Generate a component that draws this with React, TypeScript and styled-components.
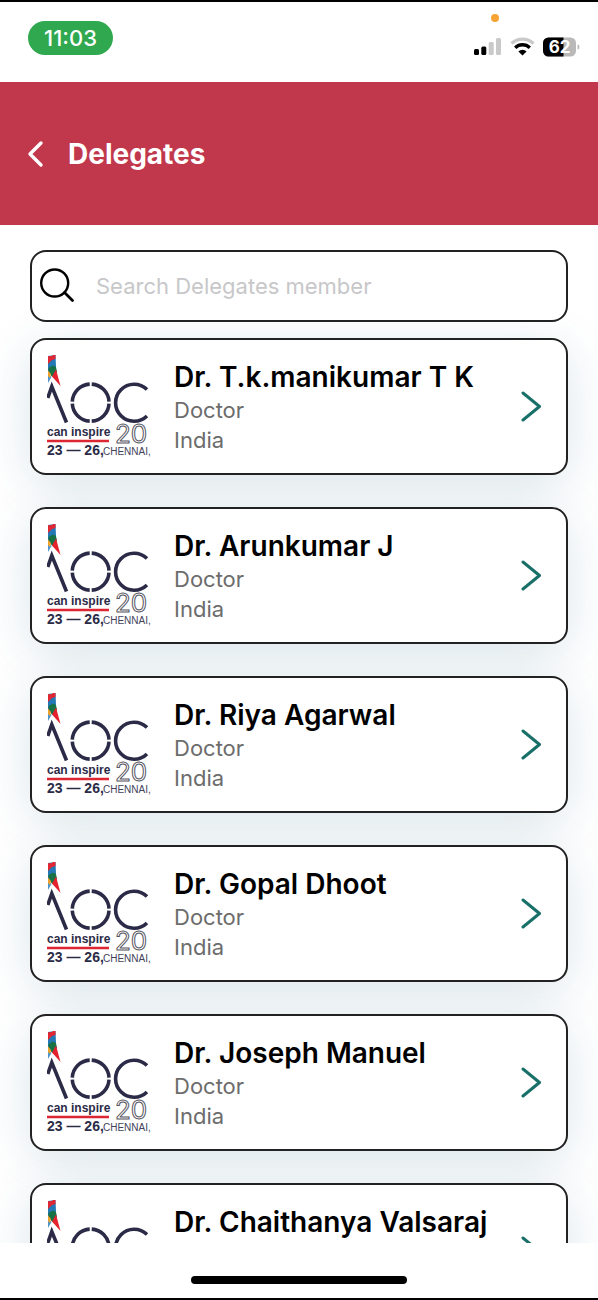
import React from "react";
import styled, { createGlobalStyle } from "styled-components";

const GlobalStyle = createGlobalStyle`
  *, *::before, *::after { box-sizing: border-box; }
  body {
    margin: 0;
    background: #fff;
    color: #000;
    font-family: Inter, "Liberation Sans", sans-serif;
  }
`;

const Screen = styled.div`
  display: flex;
  flex-direction: column;
  height: 100vh;
  overflow: hidden;
  border-top: 2px solid #000;
  border-bottom: 2px solid #000;
`;

const StatusBar = styled.div`
  display: flex;
  flex: none;
  justify-content: space-between;
  align-items: flex-start;
  height: 80px;
  padding: 19px 18px 0 28px;
`;

const Clock = styled.time`
  width: 85px;
  border-radius: 17px;
  background: #2fa84f;
  color: #fff;
  font-size: 22px;
  font-weight: 500;
  line-height: 34px;
  text-align: center;
`;

const StatusIcons = styled.div`
  position: relative;
  display: flex;
  align-items: center;
  gap: 8px;
  padding-top: 16px;
`;

const ActivityDot = styled.span`
  position: absolute;
  top: -7px;
  left: 17px;
  width: 8px;
  height: 8px;
  border-radius: 50%;
  background: #f7a334;
`;

const Header = styled.header`
  display: flex;
  flex: none;
  align-items: center;
  gap: 22px;
  height: 143px;
  padding: 0 26px;
  background: #c1374c;
  color: #fff;
`;

const BackButton = styled.button`
  display: flex;
  padding: 0;
  border: 0;
  background: none;
  color: inherit;
`;

const Title = styled.h1`
  margin: 0;
  font-size: 28px;
  font-weight: 700;
  line-height: 36px;
`;

const Main = styled.main`
  position: relative;
  isolation: isolate;
  flex: 1;
  min-height: 0;
  padding: 25px 30px 0;
  overflow: hidden auto;
  scrollbar-width: none;
`;

const SearchBox = styled.label`
  display: flex;
  align-items: center;
  gap: 20px;
  height: 72px;
  padding: 0 8px;
  border: 2px solid #222;
  border-radius: 16px;
  background: #fff;
`;

const SearchInput = styled.input`
  flex: 1;
  min-width: 0;
  padding: 0;
  border: 0;
  outline: 0;
  background: none;
  color: #000;
  font: 400 22px/32px Inter, "Liberation Sans", sans-serif;
  &::placeholder { color: #c7c7c9; opacity: 1; }
`;

const List = styled.ul`
  display: flex;
  flex-direction: column;
  gap: 32px;
  margin: 16px 0 0;
  padding: 0 0 32px;
  list-style: none;
`;

const Card = styled.a`
  position: relative;
  display: flex;
  align-items: center;
  height: 137px;
  padding: 0 23px 0 15px;
  border: 2px solid #222;
  border-radius: 16px;
  background: #fff;
  color: inherit;
  text-decoration: none;

  &::before {
    content: "";
    position: absolute;
    z-index: -1;
    inset: 0;
    border-radius: 16px;
    box-shadow: 0 10px 50px rgba(40, 100, 125, 0.18);
  }
`;

const Details = styled.div`
  flex: 1;
  min-width: 0;
  margin-left: 23px;
`;

const Name = styled.h2`
  margin: 0;
  font-size: 28px;
  font-weight: 600;
  line-height: 36px;
  white-space: nowrap;
`;

const Meta = styled.p`
  margin: 0;
  color: #6c6c6c;
  font-size: 22px;
  font-weight: 400;
  line-height: 30px;
`;

const HomeArea = styled.footer`
  display: flex;
  flex: none;
  justify-content: center;
  height: 55px;
  padding-top: 33px;
`;

const HomeIndicator = styled.span`
  width: 36%;
  height: 8px;
  border-radius: 4px;
  background: #000;
`;

const SignalIcon = () => (
  <svg width="28" height="20" viewBox="0 0 28 20" aria-label="Signal" role="img">
    <rect x="0" y="12" width="5" height="6" rx="1.5" />
    <rect x="7.3" y="9.5" width="5" height="8.5" rx="1.5" />
    <rect x="14.7" y="5" width="5" height="13" rx="1.5" fill="#c9c9c9" />
    <rect x="22" y="1" width="5" height="17" rx="1.5" fill="#c9c9c9" />
  </svg>
);

const WifiIcon = () => (
  <svg width="25" height="20" viewBox="0 0 25 20" aria-label="Wi-Fi" role="img">
    <path d="M1.500 6.500a16 16 0 0 1 22 0" fill="none" stroke="#c9c9c9" strokeWidth="3.4" />
    <path d="M5.200 10.700a10.600 10.600 0 0 1 14.600 0" fill="none" stroke="#000" strokeWidth="3.4" />
    <path d="M8.400 14.400a6 6 0 0 1 8.200 0L12.500 18.600z" />
  </svg>
);

const BatteryIcon = () => (
  <svg width="37" height="20" viewBox="0 0 37 20" aria-label="Battery 62%" role="img">
    <rect x="0" y="0.5" width="33" height="19" rx="5.5" fill="#b9b9b9" />
    <path d="M20.500 .5H5.500A5.500 5.500 0 0 0 0 6v8a5.500 5.500 0 0 0 5.500 5.500h15z" />
    <path d="M34.500 7.300c2.600.8 2.600 4.700 0 5.500z" fill="#b9b9b9" />
    <text x="16.500" y="16" fill="#fff" fontFamily="Inter, sans-serif" fontSize="17" fontWeight="700" textAnchor="middle">62</text>
  </svg>
);

const BackIcon = () => (
  <svg width="20" height="30" viewBox="0 0 20 30" fill="none" stroke="currentColor" strokeWidth="3.400" strokeLinecap="round" strokeLinejoin="round" aria-hidden="true">
    <path d="M15 4 4 15l11 11" />
  </svg>
);

const SearchIcon = () => (
  <svg width="36" height="36" viewBox="0 0 36 36" fill="none" stroke="#000" strokeWidth="2.400" strokeLinecap="round" aria-hidden="true">
    <circle cx="14.700" cy="15" r="13.500" />
    <path d="m24.500 24.500 8 8" strokeWidth="2.800" />
  </svg>
);

const ChevronIcon = () => (
  <svg width="24" height="32" viewBox="0 1 24 32" fill="none" stroke="#197069" strokeWidth="3" strokeLinecap="round" strokeLinejoin="round" aria-hidden="true">
    <path d="M4 3 20.500 16.500 4 30" />
  </svg>
);

const EventLogo = () => (
  <svg width="104" height="104" viewBox="0 1 104 104" role="img" aria-label="AOC, Chennai">
    <path d="M1 2 8.500 1 9 13 1 20z" fill="#2478b5" />
    <path d="M1 2.200 5.500 2V1H8.500V5L5 6 1 10z" fill="#e02733" />
    <path d="M1.500 14 6 11.500 9 13l1 5-4.500 5-4-4z" fill="#177245" />
    <path d="M1 20 4.500 23 1 29z" fill="#4b95cc" />
    <path d="M1 16.500 4 20l-1 4-2-2z" fill="#efa32d" />
    <path d="M9 15.500 13.500 32 5 22.500z" fill="#e3222e" />
    <g fill="none" stroke="#2b2b47" strokeWidth="3.600">
      <path d="M.8 44 4.800 32.500 19.500 68.500" />
      <path d="M42.700 30.100A18.400 18.400 0 0 0 25.300 47.600M44.700 30.100A18.400 18.400 0 0 1 62 47.600M62 49.600A18.400 18.400 0 0 1 44.700 67.100M42.700 67.100A18.400 18.400 0 0 1 25.300 49.600" />
      <path d="M100 35.500A18.500 18.500 0 1 0 100 62" />
    </g>
    <g fill="#2b2b47" fontFamily="Liberation Sans, sans-serif" fontWeight="700">
      <text x="0" y="82" fontSize="12">can inspire</text>
      <text x="0" y="101" fontSize="14">23 — 26,</text>
    </g>
    <path d="M0 87h62" stroke="#dc2733" strokeWidth="2.300" />
    <text x="68" y="89" fill="#fff" stroke="#55555f" strokeWidth="1" fontFamily="Inter, sans-serif" fontSize="26">20</text>
    <text x="56" y="101" fill="#42425a" fontFamily="Liberation Sans, sans-serif" fontSize="10">CHENNAI,</text>
  </svg>
);

const delegates = [
  "Dr. T.k.manikumar T K",
  "Dr. Arunkumar J",
  "Dr. Riya Agarwal",
  "Dr. Gopal Dhoot",
  "Dr. Joseph Manuel",
  "Dr. Chaithanya Valsaraj",
];

export default function App() {
  return (
    <>
      <GlobalStyle />
      <Screen>
        <StatusBar>
          <Clock>11:03</Clock>
          <StatusIcons>
            <ActivityDot />
            <SignalIcon />
            <WifiIcon />
            <BatteryIcon />
          </StatusIcons>
        </StatusBar>
        <Header>
          <BackButton type="button" aria-label="Back">
            <BackIcon />
          </BackButton>
          <Title>Delegates</Title>
        </Header>
        <Main>
          <SearchBox>
            <SearchIcon />
            <SearchInput type="text" aria-label="Search delegates" placeholder="Search Delegates member" />
          </SearchBox>
          <List>
            {delegates.map((name) => (
              <li key={name}>
                <Card href="#">
                  <EventLogo />
                  <Details>
                    <Name>{name}</Name>
                    <Meta>Doctor</Meta>
                    <Meta>India</Meta>
                  </Details>
                  <ChevronIcon />
                </Card>
              </li>
            ))}
          </List>
        </Main>
        <HomeArea>
          <HomeIndicator />
        </HomeArea>
      </Screen>
    </>
  );
}
